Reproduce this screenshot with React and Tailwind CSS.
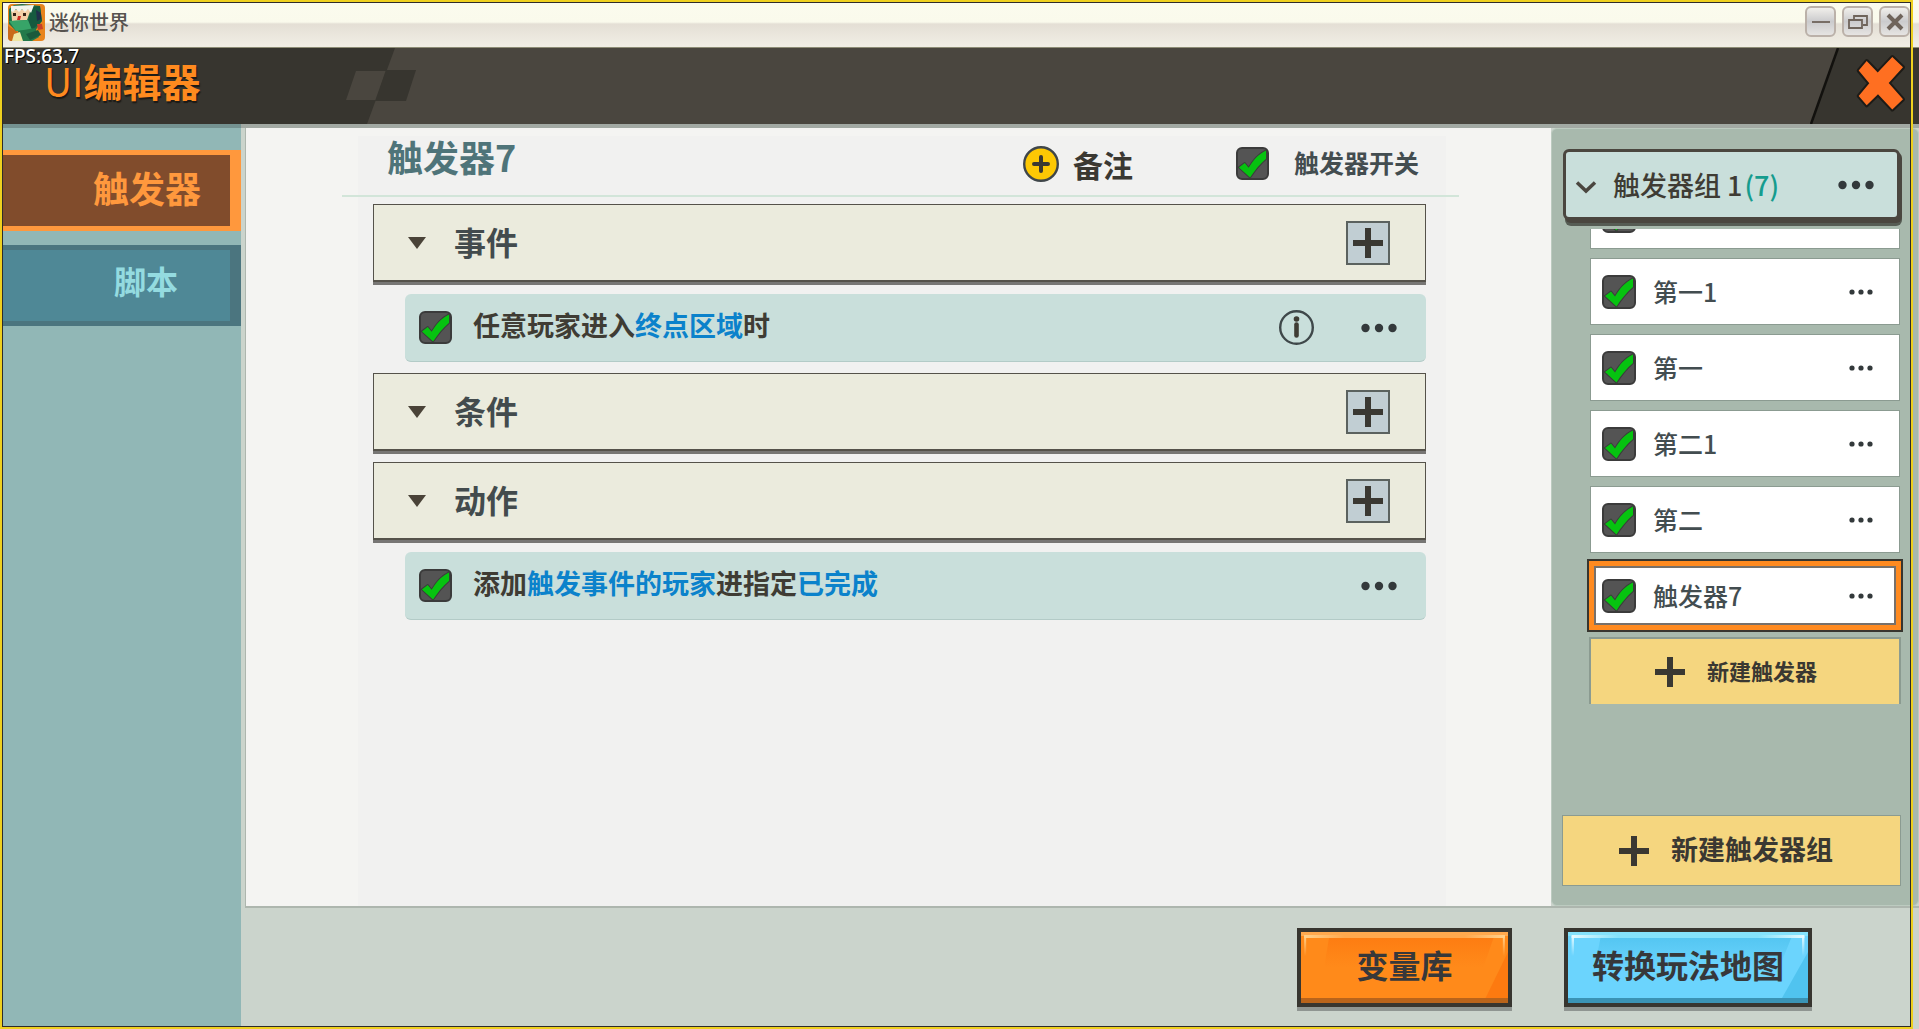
import { useState } from 'react'

const FONT = "font-['Noto_Sans_CJK_SC','Noto_Sans',sans-serif]"

// the first entry is scrolled under the group header, only its lower edge shows
const TRIGGERS = ['', '第一1', '第一', '第二1', '第二', '触发器7']

function CheckBox({ label, size = 'w-[33px] h-[33px]' }) {
  const [checked, setChecked] = useState(true)
  return (
    <label className={`grid shrink-0 ${size}`}>
      <input
        type="checkbox"
        aria-label={label}
        checked={checked}
        onChange={(e) => setChecked(e.target.checked)}
        className="col-start-1 row-start-1 appearance-none w-full h-full rounded-md border-2 border-[#3b3b3b] bg-[#545454]"
      />
      {checked && (
        <svg viewBox="0 0 34 34" className="col-start-1 row-start-1 w-full h-full pointer-events-none" aria-hidden="true">
          <path d="M3 21 L9 16.5 L13 21.5 C18 13 23 7.5 31 3.5 L31 12 C24 18 19 24.5 14.5 31.5 Z" fill="#06c310" stroke="#3b3b3b" strokeWidth="2" strokeLinejoin="round" paintOrder="stroke" />
        </svg>
      )}
    </label>
  )
}

function Plus() {
  return (
    <svg width="30" height="30" viewBox="0 0 30 30" className="shrink-0" aria-hidden="true">
      <path d="M15 0v30M0 15h30" stroke="#3a3832" strokeWidth="6" />
    </svg>
  )
}

function Dots({ small, label }) {
  return (
    <button type="button" aria-label={label} className="shrink-0 flex items-center">
      {small ? (
        <svg width="24" height="8" viewBox="0 0 24 8" fill="#33393b" aria-hidden="true">
          <circle cx="3" cy="4" r="2.6" />
          <circle cx="12" cy="4" r="2.6" />
          <circle cx="21" cy="4" r="2.6" />
        </svg>
      ) : (
        <svg width="36" height="10" viewBox="0 0 36 10" fill="#33393b" aria-hidden="true">
          <circle cx="4.5" cy="5" r="4.2" />
          <circle cx="18" cy="5" r="4.2" />
          <circle cx="31.5" cy="5" r="4.2" />
        </svg>
      )}
    </button>
  )
}

function AppLogo() {
  return (
    <svg width="37" height="37" viewBox="0 0 37 37" className="shrink-0" aria-hidden="true">
      <defs>
        <clipPath id="logo-clip">
          <rect width="37" height="37" rx="4" />
        </clipPath>
      </defs>
      <g clipPath="url(#logo-clip)">
        <rect width="37" height="37" fill="#e8841c" />
        <path d="M0 22 L10 28 L6 37 L0 37Z" fill="#c96a1a" />
        <path d="M1 5 L6 1 L14 0 L32 2 L34 17 L27 27 L8 27 L1 20Z" fill="#1f7148" />
        <path d="M24 3 L32 2 L34 17 L24 26 L20 17Z" fill="#165a3f" />
        <path d="M3 6 L23 5 L19 16 L4 17Z" fill="#f3cfa6" />
        <path d="M3 2 L26 1 L23 9 L20 5 L17 8 L14 5 L11 8 L8 5 L5 8 L3 7Z" fill="#f2f3ea" />
        <path d="M5 9h3v3H5zM15 9h3v3h-3z" fill="#3a2418" />
        <path d="M10 12 L13 12 L12 16 L9 16Z" fill="#cc2a20" />
        <path d="M1 17 L20 16 L24 26 L8 27Z" fill="#37a468" />
        <path d="M28 6 L33 9 L33 15 L29 17Z" fill="#20304a" />
        <path d="M10 27 L27 24 L31 33 L24 37 L12 37Z" fill="#23794a" />
        <path d="M18 30 L30 26 L33 31 L22 36Z" fill="#1a5a3c" />
        <path d="M6 30 L12 28 L15 37 L4 37Z" fill="#efe6a4" />
        <path d="M29 20 L34 20 L35 25 L30 26Z" fill="#c84028" />
      </g>
    </svg>
  )
}

function WindowButton({ label, children }) {
  return (
    <button
      type="button"
      aria-label={label}
      className="w-[31px] h-[31px] rounded-md border-2 border-[#bbb1a9] bg-linear-to-b from-[#f1efeb] via-[#cbcbcd] to-[#e6e4e2] flex items-center justify-center"
    >
      <svg width="22" height="22" viewBox="0 0 22 22" fill="none" stroke="#6f645b" strokeWidth="1.8" aria-hidden="true">
        {children}
      </svg>
    </button>
  )
}

function TitleBar() {
  return (
    <div className="h-12 shrink-0 pt-1 pl-2 pr-[9px] flex items-start justify-between border-b border-[#8d8d76] bg-[linear-gradient(to_bottom,#fbfbee_0,#fafaec_22px,#e4dfd5_24px,#f1eee5_46px)]">
      <div className="flex items-start gap-1">
        <AppLogo />
        <span className="text-xl leading-9 font-medium text-[#57534f]">迷你世界</span>
      </div>
      <div className="flex gap-[6px] pt-[2px]">
        <WindowButton label="最小化">
          <path d="M2 11h18" />
        </WindowButton>
        <WindowButton label="还原">
          <path d="M7 8V5h13v9h-4M2 9h13v8H2z" />
        </WindowButton>
        <WindowButton label="关闭窗口">
          <path d="M4 4l14 14M18 4L4 18" strokeWidth="4" />
        </WindowButton>
      </div>
    </div>
  )
}

function EditorHeader() {
  return (
    <header className="relative h-[76px] shrink-0 bg-[#4a463f] flex justify-between">
      <svg width="416" height="76" viewBox="0 0 416 76" className="shrink-0" aria-hidden="true">
        <path d="M0 0H395L367 76H0Z" fill="#37352f" />
        <path d="M356 23H386L376 52H346Z" fill="#4a463f" />
        <path d="M386 22H416L406 53H375Z" fill="#37352f" />
      </svg>
      <div className="absolute inset-y-0 left-1 flex flex-col">
        <span className="h-4 text-[19px] leading-4 font-medium text-white font-['Noto_Sans',sans-serif] [text-shadow:1px_1px_0_#000]">
          FPS:63.7
        </span>
        <h1 className="pl-10 text-[39px] leading-8 font-bold text-[#ff8a1f] [text-shadow:1px_2px_1px_#1c1a16]">
          <span className="font-normal">UI</span>编辑器
        </h1>
      </div>
      <button type="button" aria-label="关闭" className="shrink-0">
        <svg width="109" height="76" viewBox="0 0 109 76" aria-hidden="true">
          <path d="M28 0H109V76H1Z" fill="#37352f" />
          <path d="M28 0L1 76" stroke="#12110e" strokeWidth="2.5" />
          <path
            d="M56.7 13 L67.7 24.5 L82.3 9 L93 19.3 L78.7 35 L93 51.3 L82.3 61.5 L68 46.3 L56.7 57.3 L48.7 48 L59.3 35.3 L48.7 22.6Z"
            fill="#ff6f21"
            stroke="#1d1b17"
            strokeWidth="4"
            strokeLinejoin="round"
            paintOrder="stroke"
          />
        </svg>
      </button>
    </header>
  )
}

function SideBar() {
  return (
    <nav className="w-[241px] shrink-0 bg-[#91b7b6] pt-[26px] flex flex-col gap-[14px]">
      <button
        type="button"
        className="h-[81px] border-y-[5px] border-r-[11px] border-[#ff983d] bg-[#814c2c] pr-[29px] pb-2 text-right text-4xl font-bold text-[#ff983d]"
      >
        触发器
      </button>
      <button
        type="button"
        className="h-[81px] border-y-[5px] border-r-[11px] border-[#4b757f] bg-[#4f8896] pr-[52px] pb-3 text-right text-[32px] font-bold text-[#94dbe0]"
      >
        脚本
      </button>
    </nav>
  )
}

function SectionCard({ title }) {
  return (
    <div className="h-[78px] shrink-0 border border-b-2 border-[#55524a] bg-[#ebebdd] shadow-[0_3px_0_0_#777674] mb-[7px] pl-[34px] pr-[35px] flex items-center">
      <svg width="18" height="12" viewBox="0 0 18 12" aria-hidden="true">
        <path d="M0 0H18L9 12Z" fill="#4a4338" />
      </svg>
      <h3 className="pl-7 pb-1 flex-1 text-[32px] leading-10 font-bold text-[#434b4d]">{title}</h3>
      <button
        type="button"
        aria-label={`添加${title}`}
        className="w-11 h-11 border-2 border-[#5b625f] bg-[#c1ced3] flex items-center justify-center"
      >
        <Plus />
      </button>
    </div>
  )
}

function ItemRow({ label, info, children }) {
  return (
    <div className="ml-8 h-[68px] shrink-0 rounded-md border-b border-[#b3cbc7] bg-[#c9dfdb] pl-[14px] pr-[29px] flex items-center">
      <CheckBox label={label} />
      <p className="pl-[21px] pb-1.5 flex-1 text-[27px] leading-9 font-bold text-[#3f3c34]">{children}</p>
      {info && (
        <button type="button" aria-label="说明" className="mr-[47px]">
          <svg width="35" height="35" viewBox="0 0 35 35" fill="none" aria-hidden="true">
            <circle cx="17.5" cy="17.5" r="16.3" stroke="#3f484a" strokeWidth="2.4" />
            <circle cx="17.5" cy="9" r="2.8" fill="#3f3c34" />
            <path d="M17.5 14.500v11" stroke="#3f3c34" strokeWidth="4.6" strokeLinecap="round" />
          </svg>
        </button>
      )}
      <Dots label="更多" />
    </div>
  )
}

function Param({ children }) {
  return (
    <a href="#param" className="text-[#0b82cb]">
      {children}
    </a>
  )
}

function TriggerEditor() {
  return (
    <main className="flex-1 min-w-0 bg-[#f4f4f2] pt-2 pl-28 pr-[105px]">
      <div className="h-full bg-[#f1f1f0]">
        <div className="-ml-4 -mr-[13px] h-[61px] border-b-2 border-[#d2e5d9] pl-[45px] pr-10 flex items-center">
          <h2 className="flex-1 pb-5 text-4xl leading-10 font-bold text-[#4f7479]">触发器7</h2>
          <button type="button" className="flex items-center gap-[14px] pb-1">
            <svg width="36" height="36" viewBox="0 0 36 36" aria-hidden="true">
              <circle cx="18" cy="18" r="16.8" fill="#fdc804" stroke="#3f464a" strokeWidth="2.4" />
              <path d="M18 11v14M11 18h14" stroke="#3a3832" strokeWidth="4" strokeLinecap="round" />
            </svg>
            <span className="text-[30px] leading-9 font-bold text-[#3a3832]">备注</span>
          </button>
          <div className="pl-[103px] pb-1 flex items-center">
            <CheckBox label="触发器开关" />
            <span className="pl-[25px] pb-1 text-[25px] leading-8 font-bold text-[#434d50]">触发器开关</span>
          </div>
        </div>
        <div className="pt-[7px] pl-[15px] pr-5 flex flex-col">
          <SectionCard title="事件" />
          <div className="pt-[5px] pb-[11px]">
            <ItemRow label="任意玩家进入终点区域时" info>
              任意玩家进入<Param>终点区域</Param>时
            </ItemRow>
          </div>
          <SectionCard title="条件" />
          <div className="h-1" />
          <SectionCard title="动作" />
          <div className="pt-[5px]">
            <ItemRow label="添加触发事件的玩家进指定已完成">
              添加<Param>触发事件的玩家</Param>进指定<Param>已完成</Param>
            </ItemRow>
          </div>
        </div>
      </div>
    </main>
  )
}

function TriggerRow({ name, selected }) {
  return (
    <li
      className={`h-[65px] shrink-0 bg-white pl-[11px] pr-[26px] flex items-center ${
        selected
          ? 'shadow-[inset_0_0_0_3px_#ff8a1f,inset_0_0_0_5px_#77706a,0_0_0_2px_#ff8a1f,0_0_0_4px_#37352f]'
          : 'shadow-[0_0_0_1px_#8b9b91]'
      }`}
    >
      <CheckBox label={name || '触发器'} size="w-[34px] h-[34px]" />
      <span className="pl-[17px] pb-0.5 flex-1 text-[25px] leading-8 font-medium text-[#434d50]">{name}</span>
      <Dots small label={`${name} 更多`} />
    </li>
  )
}

function TriggerPanel() {
  return (
    <aside className="w-[368px] shrink-0 rounded-md border border-[#bccbc0] bg-[#a8b9ad] pt-5 pl-[11px] pr-[18px] pb-5 flex flex-col">
      <div className="h-[71px] shrink-0 rounded-md border-[3px] border-[#4a463f] bg-[#c9dfdb] shadow-[2px_3px_0_0_#4a463f,2px_6px_0_0_#565c54] pl-[9px] pr-[23px] flex items-center">
        <svg width="22" height="14" viewBox="0 0 22 14" fill="none" className="mt-1" aria-hidden="true">
          <path d="M2 2.5L11 11L20 2.5" stroke="#4a463f" strokeWidth="3.5" />
        </svg>
        <span className="pl-4 flex-1 text-[27px] leading-9 font-medium text-[#3f3c34]">
          触发器组 1<span className="pl-0.5 text-[#159c8e]">(7)</span>
        </span>
        <Dots label="触发器组 更多" />
      </div>
      <ul className="mt-[9px] ml-5 -mr-2 pl-2 pr-[9px] h-[475px] overflow-hidden flex flex-col justify-end gap-[11px]">
        {TRIGGERS.map((name, i) => (
          <TriggerRow key={name} name={name} selected={i === TRIGGERS.length - 1} />
        ))}
        <li className="shrink-0 flex">
          <button
            type="button"
            className="h-[65px] flex-1 bg-[#f5d67f] shadow-[0_0_0_2px_#8b9b91] pl-16 flex items-center gap-[22px] text-[22px] font-bold text-[#3a3832]"
          >
            <Plus />
            <span className="pb-0.5">新建触发器</span>
          </button>
        </li>
      </ul>
      <button
        type="button"
        className="mt-auto h-[69px] shrink-0 bg-[#f5d67f] shadow-[0_0_0_1px_#8b9b91] pl-14 flex items-center gap-[22px] text-[27px] font-bold text-[#3a3832]"
      >
        <Plus />
        <span className="pb-0.5">新建触发器组</span>
      </button>
    </aside>
  )
}

const TONES = {
  orange: { base: '#ff8a1a', deep: '#fd7a10', low: '#b9641b', edge: '#ffa94e', shine: '#ffd08a' },
  blue: { base: '#6bd4fd', deep: '#50c3ef', low: '#3a93b5', edge: '#85e2fb', shine: '#e4faff' },
}

function GameButton({ tone, width, children }) {
  const c = TONES[tone]
  return (
    <button
      type="button"
      className={`grid h-[79px] border-4 border-[#37352f] shadow-[0_4px_0_0_#8f9591] ${width}`}
    >
      <svg viewBox="0 0 200 71" preserveAspectRatio="none" className="col-start-1 row-start-1 w-full h-[71px]" aria-hidden="true">
        <defs>
          <linearGradient id={`face-${tone}`} x1="0" y1="0" x2="0" y2="1">
            <stop offset="0" stopColor={c.deep} />
            <stop offset="0.7" stopColor={c.base} />
          </linearGradient>
          <linearGradient id={`shine-${tone}`} x1="0" y1="0" x2="1" y2="0">
            <stop offset="0" stopColor={c.shine} />
            <stop offset="0.2" stopColor={c.edge} />
            <stop offset="0.8" stopColor={c.edge} />
            <stop offset="1" stopColor={c.shine} />
          </linearGradient>
          <linearGradient id={`side-${tone}`} x1="0" y1="0" x2="0" y2="1">
            <stop offset="0" stopColor={c.shine} />
            <stop offset="1" stopColor={c.shine} stopOpacity="0" />
          </linearGradient>
        </defs>
        <rect width="200" height="71" fill={c.base} />
        <path d="M28 0H188L176 36L20 50Z" fill={`url(#face-${tone})`} />
        <path d="M200 20V71H176Z" fill={c.deep} />
        <rect width="200" height="4" fill={c.edge} />
        <rect x="3" y="3" width="194" height="3" fill={`url(#shine-${tone})`} />
        <rect x="3" y="4" width="2" height="20" fill={`url(#side-${tone})`} />
        <rect x="195" y="4" width="2" height="20" fill={`url(#side-${tone})`} />
        <rect y="66" width="200" height="5" fill={c.low} />
      </svg>
      <span className="col-start-1 row-start-1 pb-2 self-center text-center text-[32px] leading-10 font-bold text-[#37383a]">
        {children}
      </span>
    </button>
  )
}

export default function App() {
  return (
    <div className={`relative min-h-screen flex flex-col overflow-hidden bg-[#cbd4cc] ${FONT}`}>
      <TitleBar />
      <EditorHeader />
      <div className="flex-1 flex">
        <SideBar />
        <div className="flex-1 min-w-0 flex flex-col">
          <div className="flex-1 pl-1 pt-1 flex">
            <div className="flex-1 min-w-0 flex border-l border-b-2 border-[#adb6ae]">
              <TriggerEditor />
              <TriggerPanel />
            </div>
          </div>
          <footer className="h-[121px] shrink-0 pt-5 pr-[107px] flex items-start justify-end gap-[52px]">
            <GameButton tone="orange" width="w-[215px]">变量库</GameButton>
            <GameButton tone="blue" width="w-[248px]">转换玩法地图</GameButton>
          </footer>
        </div>
      </div>
      {/* header drop shadow */}
      <div className="absolute inset-x-0 top-[124px] h-1 bg-black/20 pointer-events-none" />
      {/* window outline */}
      <div className="absolute inset-y-0 left-0 right-[6px] border-2 border-[#eed01f] pointer-events-none">
        <div className="h-full border border-[#2e2b2b]" />
      </div>
    </div>
  )
}
